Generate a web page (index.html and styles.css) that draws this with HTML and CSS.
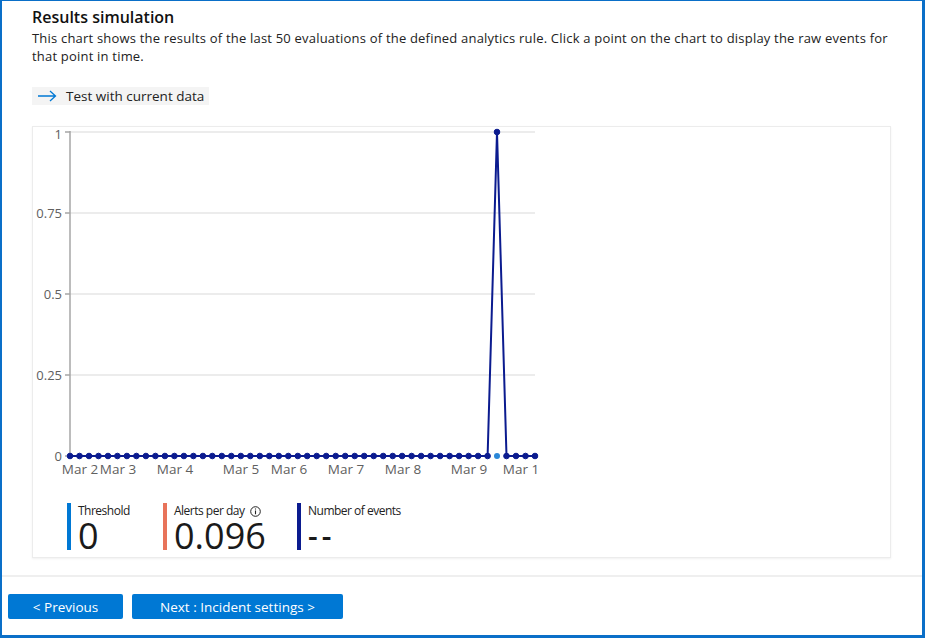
FILE: index.html
```html
<!DOCTYPE html>
<html>
<head>
<meta charset="utf-8">
<link rel="stylesheet" href="styles.css">
</head>
<body>
<div class="frame">
  <div class="content">
    <h1 class="title">Results simulation</h1>
    <p class="desc">This chart shows the results of the last 50 evaluations of the defined analytics rule. Click a point on the chart to display the raw events for that point in time.</p>
    <button class="test-btn">
      <svg class="arrow" width="20" height="12" viewBox="0 0 20 12"><path d="M1 6H18.5M13 1L18.5 6L13 11" fill="none" stroke="#0078d4" stroke-width="1.3"/></svg>
      <span>Test with current data</span>
    </button>
    <div class="card">
      <svg class="chart" width="540" height="362" viewBox="0 -6 540 362">
        <g class="grid" stroke="#e6e6e6" stroke-width="1.5">
          <line x1="37" y1="5" x2="502" y2="5"/>
          <line x1="37" y1="86" x2="502" y2="86"/>
          <line x1="37" y1="167" x2="502" y2="167"/>
          <line x1="37" y1="248" x2="502" y2="248"/>
        </g>
        <g stroke="#a6a6a6" stroke-width="1.5">
          <line x1="37" y1="4" x2="37" y2="329"/>
          <line x1="32" y1="5" x2="37" y2="5"/>
          <line x1="32" y1="86" x2="37" y2="86"/>
          <line x1="32" y1="167" x2="37" y2="167"/>
          <line x1="32" y1="248" x2="37" y2="248"/>
          <line x1="32" y1="329" x2="37" y2="329"/>
        </g>
        <g class="ylab" text-anchor="end">
          <text x="29" y="12">1</text>
          <text x="29" y="91">0.75</text>
          <text x="29" y="172">0.5</text>
          <text x="29" y="253">0.25</text>
          <text x="29" y="334">0</text>
        </g>
        <g class="xlab" text-anchor="middle">
          <text x="47" y="347">Mar 2</text>
          <text x="85" y="347">Mar 3</text>
          <text x="142" y="347">Mar 4</text>
          <text x="208" y="347">Mar 5</text>
          <text x="256" y="347">Mar 6</text>
          <text x="313" y="347">Mar 7</text>
          <text x="370" y="347">Mar 8</text>
          <text x="436" y="347">Mar 9</text>
          <text x="488" y="347">Mar 1</text>
        </g>
        <polyline points="37,329 454.6,329 464,5 473.5,329 502,329" fill="none" stroke="#0b1b8f" stroke-width="2"/>
        <g fill="#0b1b8f" stroke="#0b1b8f" stroke-width="1">
          <circle cx="37" cy="329" r="2.8"/><circle cx="46.5" cy="329" r="2.8"/><circle cx="56" cy="329" r="2.8"/><circle cx="65.5" cy="329" r="2.8"/><circle cx="75" cy="329" r="2.8"/>
          <circle cx="84.4" cy="329" r="2.8"/><circle cx="93.9" cy="329" r="2.8"/><circle cx="103.4" cy="329" r="2.8"/><circle cx="112.9" cy="329" r="2.8"/><circle cx="122.4" cy="329" r="2.8"/>
          <circle cx="131.9" cy="329" r="2.8"/><circle cx="141.4" cy="329" r="2.8"/><circle cx="150.9" cy="329" r="2.8"/><circle cx="160.4" cy="329" r="2.8"/><circle cx="169.9" cy="329" r="2.8"/>
          <circle cx="179.3" cy="329" r="2.8"/><circle cx="188.8" cy="329" r="2.8"/><circle cx="198.3" cy="329" r="2.8"/><circle cx="207.8" cy="329" r="2.8"/><circle cx="217.3" cy="329" r="2.8"/>
          <circle cx="226.8" cy="329" r="2.8"/><circle cx="236.3" cy="329" r="2.8"/><circle cx="245.8" cy="329" r="2.8"/><circle cx="255.3" cy="329" r="2.8"/><circle cx="264.8" cy="329" r="2.8"/>
          <circle cx="274.2" cy="329" r="2.8"/><circle cx="283.7" cy="329" r="2.8"/><circle cx="293.2" cy="329" r="2.8"/><circle cx="302.7" cy="329" r="2.8"/><circle cx="312.2" cy="329" r="2.8"/>
          <circle cx="321.7" cy="329" r="2.8"/><circle cx="331.2" cy="329" r="2.8"/><circle cx="340.7" cy="329" r="2.8"/><circle cx="350.2" cy="329" r="2.8"/><circle cx="359.7" cy="329" r="2.8"/>
          <circle cx="369.1" cy="329" r="2.8"/><circle cx="378.6" cy="329" r="2.8"/><circle cx="388.1" cy="329" r="2.8"/><circle cx="397.6" cy="329" r="2.8"/><circle cx="407.1" cy="329" r="2.8"/>
          <circle cx="416.6" cy="329" r="2.8"/><circle cx="426.1" cy="329" r="2.8"/><circle cx="435.6" cy="329" r="2.8"/><circle cx="445.1" cy="329" r="2.8"/><circle cx="454.6" cy="329" r="2.8"/>
          <circle cx="464" cy="5" r="2.8"/><circle cx="473.5" cy="329" r="2.8"/><circle cx="483" cy="329" r="2.8"/><circle cx="492.5" cy="329" r="2.8"/><circle cx="502" cy="329" r="2.8"/>
        </g>
        <circle cx="464" cy="329" r="3" fill="#2b88d8"/>
      </svg>
      <div class="legend">
        <div class="item item-threshold">
          <span class="bar bar-blue"></span>
          <div class="item-text">
            <div class="label">Threshold</div>
            <div class="value">0</div>
          </div>
        </div>
        <div class="item item-alerts">
          <span class="bar bar-orange"></span>
          <div class="item-text">
            <div class="label">Alerts per day <svg class="info" width="11" height="11" viewBox="0 0 11 11"><circle cx="5.5" cy="5.5" r="4.8" fill="none" stroke="#222" stroke-width="1"/><path d="M5.5 4.6V8.2M5.5 2.6V3.6" stroke="#222" stroke-width="1.1"/></svg></div>
            <div class="value">0.096</div>
          </div>
        </div>
        <div class="item item-events">
          <span class="bar bar-navy"></span>
          <div class="item-text">
            <div class="label">Number of events</div>
            <div class="value value-dash">--</div>
          </div>
        </div>
      </div>
    </div>
  </div>
  <div class="footer">
    <button class="btn btn-prev">&lt; Previous</button>
    <button class="btn btn-next">Next : Incident settings &gt;</button>
  </div>
</div>
</body>
</html>
```

FILE: styles.css
```css
* { box-sizing: border-box; }
html, body { margin: 0; padding: 0; background: #fff; }
body {
  font-family: "Open Sans", "Noto Sans", sans-serif;
  color: #1b1b1b;
}
.frame {
  width: 925px;
  height: 638px;
  border-style: solid;
  border-color: #0a6fc8;
  border-width: 1px 3px 3px 2px;
  display: flex;
  flex-direction: column;
}
.content {
  padding: 0 30px 0 30px;
  height: 576px;
  border-bottom: 2px solid #efefef;
}
.title {
  margin: 0;
  padding-top: 6px;
  font-size: 16px;
  font-weight: 600;
  line-height: 20px;
  letter-spacing: 0;
  color: #111;
}
.desc {
  margin: 2px 0 0 0;
  font-size: 13px;
  line-height: 18px;
  letter-spacing: 0.2px;
  color: #222;
}
.test-btn {
  margin-top: 22px;
  display: flex;
  align-items: center;
  width: 177px;
  height: 18px;
  padding: 0 0 0 5px;
  border: none;
  background: #f4f4f4;
  font-family: inherit;
  font-size: 13.5px;
  letter-spacing: 0;
  color: #222;
  cursor: pointer;
}
.test-btn .arrow { margin-right: 9px; }
.card {
  margin-top: 21px;
  width: 859px;
  height: 432px;
  border: 1px solid #ececec;
  box-shadow: 0 1px 2px rgba(0,0,0,0.06);
  background: #fff;
}
.chart { display: block; overflow: visible; margin-top: -6px; }
.ylab text, .xlab text {
  font-family: "Open Sans", "Noto Sans", sans-serif;
  font-size: 13px;
  fill: #606060;
}
.xlab text { font-size: 13.5px; }
.legend {
  display: flex;
  padding-left: 34px;
  margin-top: 20px;
}
.item { display: flex; gap: 7px; }
.item-threshold { width: 96px; }
.item-alerts { width: 134px; }
.bar { width: 4px; height: 47px; }
.bar-blue { background: #0078d4; }
.bar-orange { background: #e8735a; }
.bar-navy { background: #0b1b8f; }
.item-text { display: flex; flex-direction: column; }
.label {
  font-size: 12px;
  letter-spacing: -0.5px;
  line-height: 14px;
  margin-top: 1px;
  color: #222;
  display: flex;
  align-items: center;
  gap: 3px;
  white-space: nowrap;
}
.info { margin-left: 2px; }
.value {
  margin-top: 2px;
  font-size: 36px;
  line-height: 32px;
  letter-spacing: 0;
  color: #1a1a1a;
}
.value-dash {
  font-size: 30px;
  font-weight: 600;
  letter-spacing: 4px;
  line-height: 32px;
}
.footer {
  display: flex;
  gap: 9px;
  padding: 17px 0 0 6px;
}
.btn {
  height: 25px;
  border: none;
  border-radius: 2px;
  background: #0078d4;
  color: #fff;
  font-family: "Open Sans", "Noto Sans", sans-serif;
  font-size: 13.5px;
  letter-spacing: 0;
  cursor: pointer;
}
.btn-prev { width: 115px; }
.btn-next { width: 211px; }
```
